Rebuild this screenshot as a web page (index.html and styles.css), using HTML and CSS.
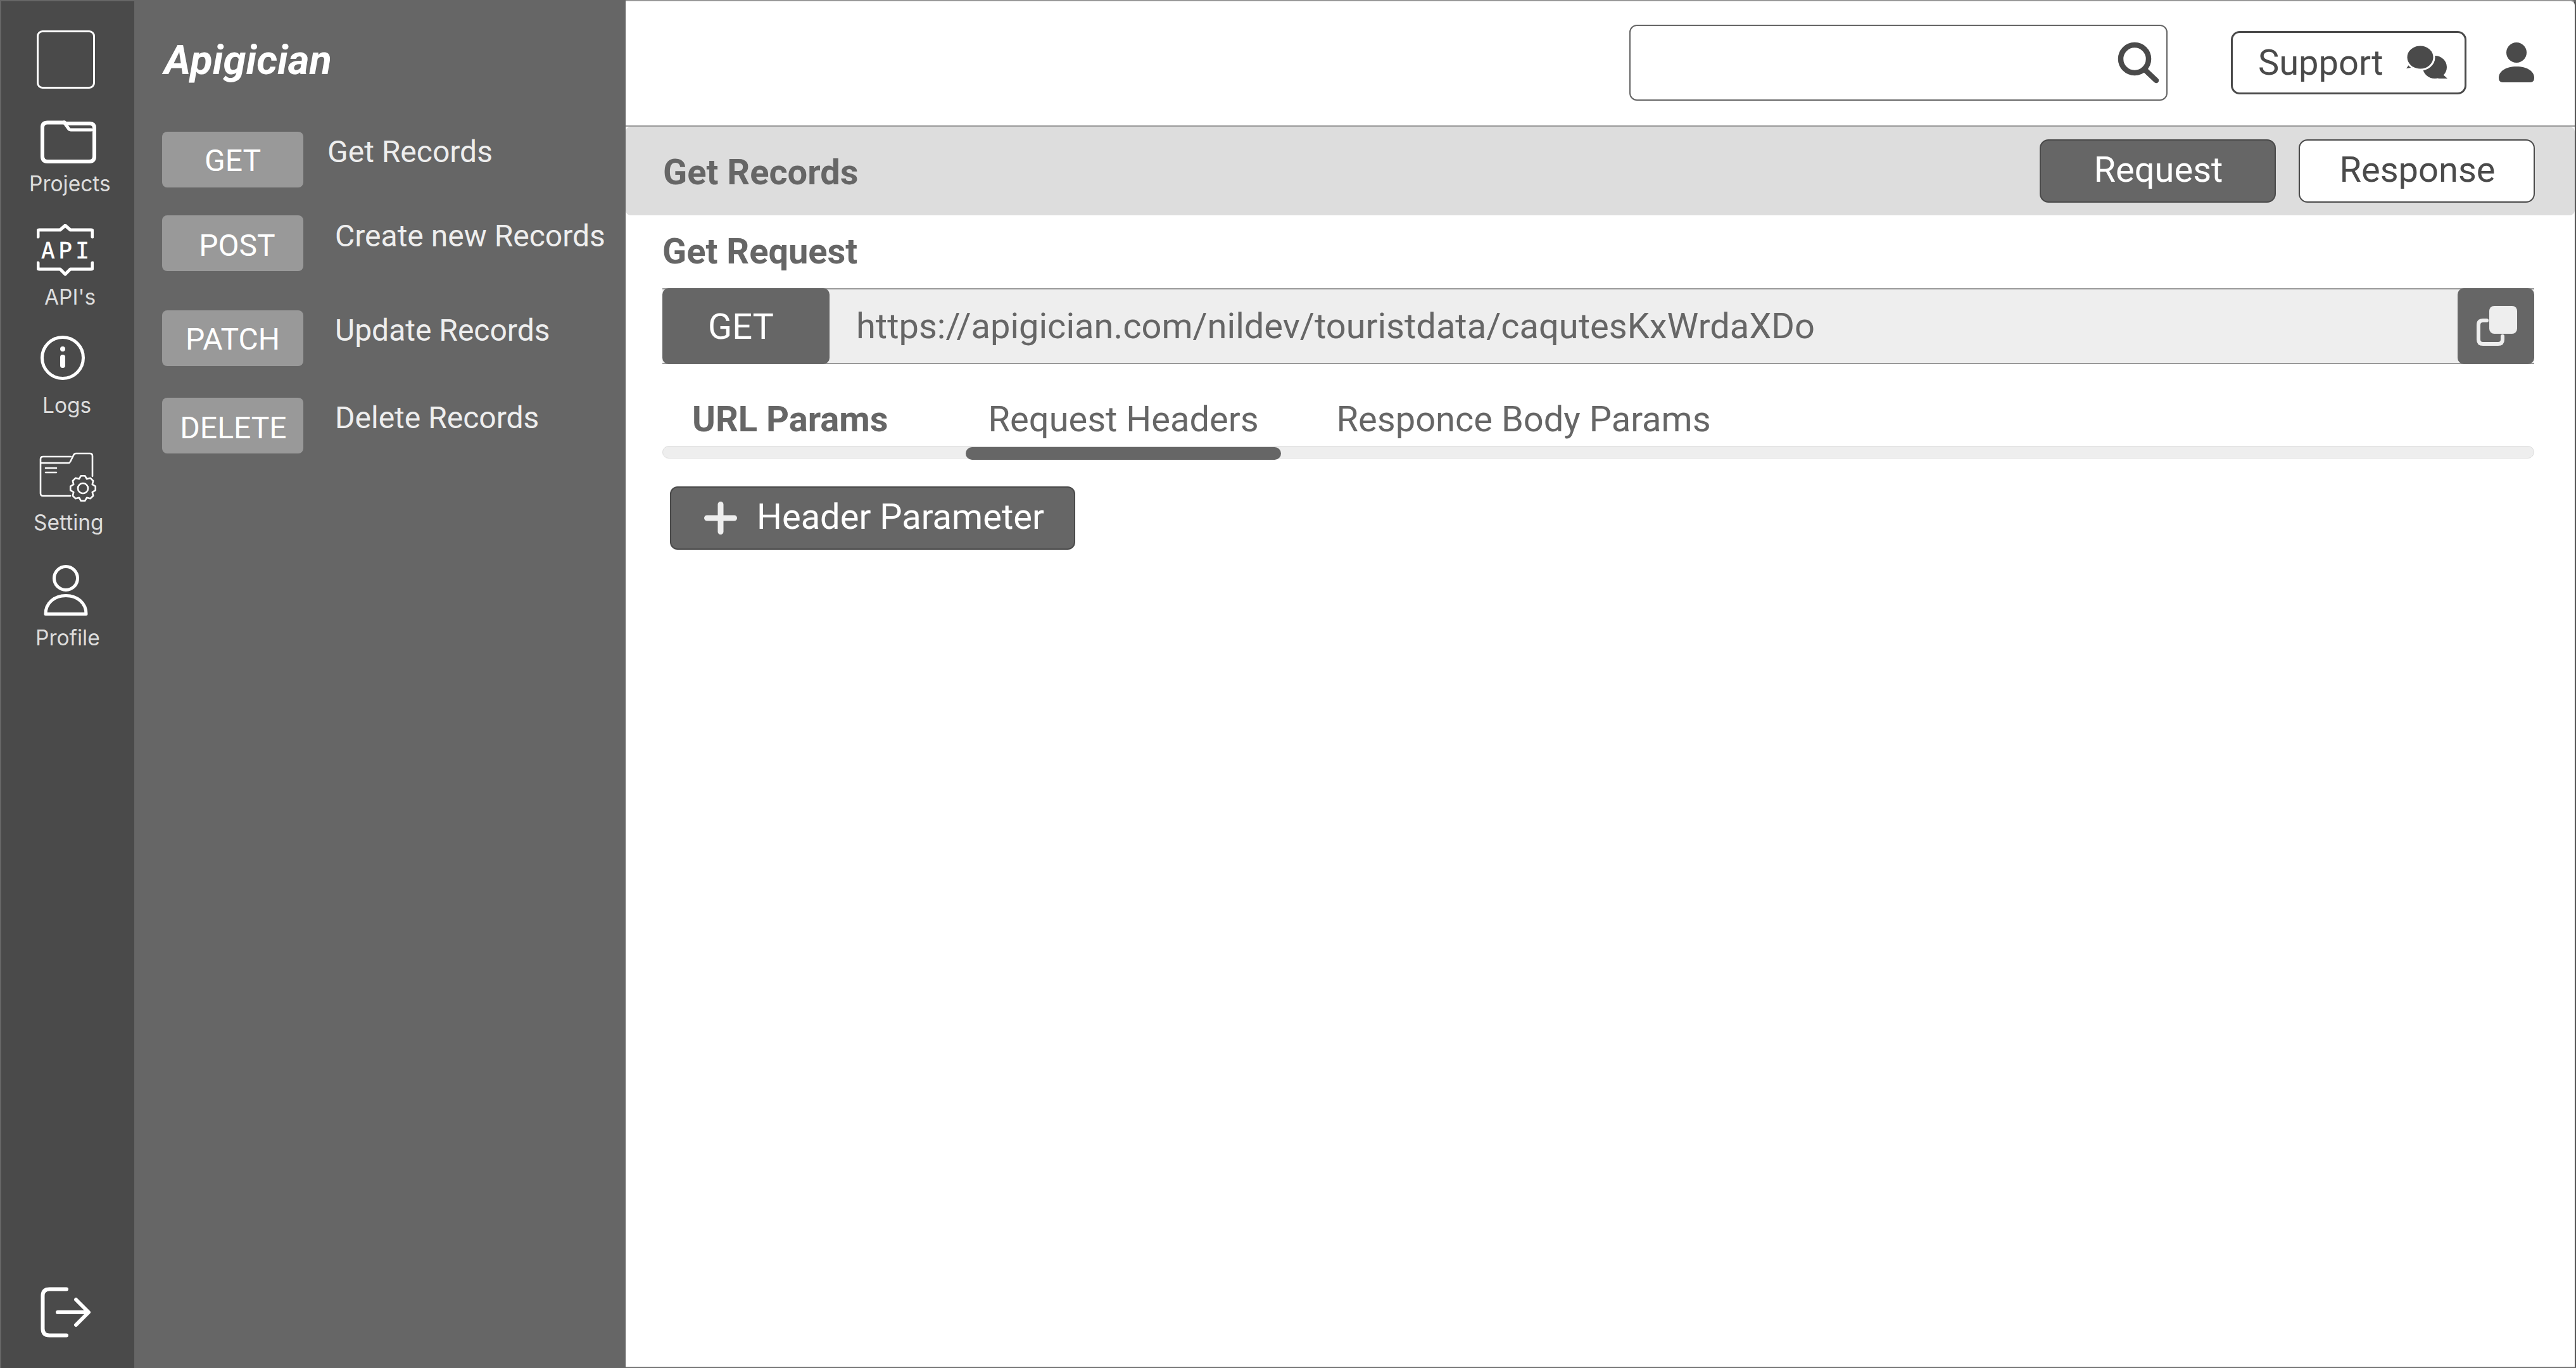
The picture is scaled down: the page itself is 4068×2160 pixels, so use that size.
FILE: index.html
```html
<!DOCTYPE html>
<html lang="en">
<head>
<meta charset="utf-8">
<title>Apigician</title>
<link rel="stylesheet" href="styles.css">
</head>
<body>
<div class="shell">
  <nav class="rail">
    <div class="rail-logo"></div>
    <a class="rail-item item-projects">
      <svg class="ri ri-projects" width="88" height="68" viewBox="0 0 88 68"><path d="M38 3.5H11Q3 3.5 3 11V57Q3 65 11 65H77Q85 65 85 57V12Q85 5 78 5H42"/><path d="M37 3L45 14Q46 15 50 15H80" class="thin"/></svg>
      <span class="rl rl-projects">Projects</span>
    </a>
    <a class="rail-item item-apis">
      <svg class="ri ri-apis" width="90" height="82" viewBox="0 0 90 82"><path class="mid" d="M2 20V11Q2 9 4 9H37L45 2L53 9H86Q88 9 88 11V20M2 61V69Q2 71 4 71H37L45 79L53 71H86Q88 71 88 69V61"/><text class="api-text" x="7" y="54">API</text></svg>
      <span class="rl rl-apis">API's</span>
    </a>
    <a class="rail-item item-logs">
      <svg class="ri ri-logs" width="70" height="70" viewBox="0 0 70 70"><circle cx="35" cy="35" r="32.5" class="mid"/><circle cx="35" cy="21" r="4" class="solid"/><path d="M35 34V47" class="bar"/></svg>
      <span class="rl rl-logs">Logs</span>
    </a>
    <a class="rail-item item-setting">
      <svg class="ri ri-setting" width="92" height="80" viewBox="0 0 92 80"><g class="fine"><path d="M49 69H6Q2 69 2 65V11Q2 7 6 7H50M2 17H46Q48 17 49 15L54 5Q55 2 58 2H80Q84 2 84 6V38M10 25H27M10 32H27"/><polygon transform="translate(69 57)" points="-3.13,-19.75 3.13,-19.75 6.12,-14.78 11.76,-16.18 16.18,-11.76 14.78,-6.12 19.75,-3.13 19.75,3.13 14.78,6.12 16.18,11.76 11.76,16.18 6.12,14.78 3.13,19.75 -3.13,19.75 -6.12,14.78 -11.76,16.18 -16.18,11.76 -14.78,6.12 -19.75,3.13 -19.75,-3.13 -14.78,-6.12 -16.18,-11.76 -11.76,-16.18 -6.12,-14.78"/><circle cx="69" cy="57" r="8"/></g></svg>
      <span class="rl rl-setting">Setting</span>
    </a>
    <a class="rail-item item-profile">
      <svg class="ri ri-profile" width="70" height="80" viewBox="0 0 70 80"><circle cx="35" cy="21" r="18.5" class="mid"/><path class="mid" d="M3 77.5C3 60 17 48.5 35 48.5C53 48.5 67 60 67 77.5Z"/></svg>
      <span class="rl rl-profile">Profile</span>
    </a>
    <a class="rail-logout">
      <svg class="ri" width="80" height="80" viewBox="0 0 80 80"><path d="M41 3.5H14Q3.5 3.5 3.5 14V66Q3.5 76.5 14 76.5H41M27 40H75M56 20L76 40L56 60"/></svg>
    </a>
  </nav>

  <aside class="panel">
    <div class="brand">Apigician</div>
    <div class="ep ep-get"><span class="badge b-get">GET</span><span class="ep-text t-get">Get Records</span></div>
    <div class="ep ep-post"><span class="badge b-post">POST</span><span class="ep-text t-post">Create new Records</span></div>
    <div class="ep ep-patch"><span class="badge b-patch">PATCH</span><span class="ep-text t-patch">Update Records</span></div>
    <div class="ep ep-delete"><span class="badge b-delete">DELETE</span><span class="ep-text t-delete">Delete Records</span></div>
  </aside>

  <main class="main">
    <header class="top">
      <div class="search">
        <svg width="66" height="68" viewBox="0 0 66 68" class="i-search"><circle cx="27" cy="28" r="22"/><path d="M43 45L61 62"/></svg>
      </div>
      <div class="support"><span>Support</span>
        <svg class="i-support" width="66" height="54" viewBox="0 0 66 54"><ellipse cx="45" cy="34" rx="19" ry="18"/><path d="M56 44L65 52L50 52Z"/><path d="M6 28L0 36L13 34Z"/><ellipse class="front" cx="22" cy="18.500" rx="22" ry="19.500"/></svg>
      </div>
      <svg class="i-user" width="56" height="64" viewBox="0 0 56 64"><circle cx="28" cy="16" r="16"/><path d="M0 56C0 45 12 38 28 38C44 38 56 45 56 56Q56 63 50 63H6Q0 63 0 56Z"/></svg>
    </header>

    <section class="bar">
      <h1 class="bar-title">Get Records</h1>
      <div class="seg">
        <span class="seg-btn seg-on">Request</span>
        <span class="seg-btn seg-off">Response</span>
      </div>
    </section>

    <section class="content">
      <h2 class="req-title">Get Request</h2>
      <div class="url">
        <span class="url-method">GET</span>
        <span class="url-text">https://apigician.com/nildev/touristdata/caqutesKxWrdaXDo</span>
        <span class="url-copy">
          <svg width="64" height="64" viewBox="0 0 64 64"><rect x="20" y="0" width="44" height="44" rx="8" class="cf"/><path d="M16 23H10Q3 23 3 30V53Q3 60 10 60H34Q41 60 41 53V48" class="cs"/></svg>
        </span>
      </div>
      <div class="tabs">
        <span class="tab tab-url">URL Params</span>
        <span class="tab tab-hdr">Request Headers</span>
        <span class="tab tab-body">Responce Body Params</span>
      </div>
      <div class="track"><div class="track-on"></div></div>
      <div class="add">
        <svg width="52" height="52" viewBox="0 0 52 52"><path d="M4.500 26H47.500M26 4.500V47.500"/></svg>
        <span class="add-label">Header Parameter</span>
      </div>
    </section>
  </main>
</div>
</body>
</html>
```

FILE: styles.css
```css
* { box-sizing: border-box; }
html, body { margin: 0; padding: 0; background: #fff; }
body { font-family: Roboto, "Liberation Sans", sans-serif; }
h1, h2 { margin: 0; }

.shell { display: flex; width: 4068px; height: 2160px; overflow: hidden; background: #666; }

/* icon rail */
.rail { position: relative; flex: 0 0 210px; margin: 2px 0 0 2px; background: #4a4a4a; display: flex; flex-direction: column; padding-top: 46px; }
.rail-logo { width: 92px; height: 92px; margin-left: 56px; border: 3px solid #fff; border-radius: 9px; }
.rail-item { display: flex; flex-direction: column; align-items: flex-start; font-family: Inter, Roboto, sans-serif; font-size: 33.5px; line-height: 38px; color: #ddd; }
.ri { display: block; fill: none; stroke: #fff; stroke-width: 6; stroke-linecap: round; stroke-linejoin: round; }
.ri .thin { stroke-width: 5; }
.ri .mid { stroke-width: 5; }
.ri .solid { fill: #fff; stroke: none; }
.ri .bar { stroke-width: 8; }
.ri .fine { stroke-width: 2.6; }
.api-text { font-family: "DejaVu Sans Mono", monospace; font-size: 36px; letter-spacing: 5.5px; fill: #fff; stroke: #fff; stroke-width: .5; }

.item-projects { margin-top: 50px; }
.ri-projects { margin-left: 62px; }
.rl-projects { margin: 13px 0 0 44px; }
.item-apis { margin-top: 45px; }
.ri-apis { margin-left: 56px; }
.rl-apis { margin: 14px 0 0 68px; }
.item-logs { margin-top: 42px; }
.ri-logs { margin-left: 62px; }
.rl-logs { margin: 21px 0 0 65px; }
.item-setting { margin-top: 55px; }
.ri-setting { margin-left: 60px; }
.rl-setting { margin: 12px 0 0 51px; }
.item-profile { margin-top: 48px; }
.ri-profile { margin-left: 67px; }
.rl-profile { margin: 16px 0 0 54px; }
.rail-logout { position: absolute; left: 62px; top: 2030px; }

/* endpoints panel */
.panel { flex: 0 0 776px; padding: 0 0 0 44px; color: #eee; }
.brand { font-weight: 700; font-style: italic; font-size: 65px; line-height: 70px; color: #fff; margin-top: 60px; margin-left: 3px; }
.ep { display: flex; align-items: flex-start; }
.ep-get { margin-top: 78px; }
.ep-post { margin-top: 44px; }
.ep-patch { margin-top: 62px; }
.ep-delete { margin-top: 50px; }
.badge { flex: 0 0 223px; height: 88px; background: #999; border-radius: 8px; color: #fff; font-size: 48px; line-height: 88px; text-align: center; }
.b-get { padding-top: 2px; }
.b-post { padding-left: 14px; padding-top: 4px; }
.b-patch { padding-top: 2px; }
.b-delete { padding-top: 4px; padding-left: 2px; }
.ep-text { font-size: 48px; line-height: 54px; white-space: nowrap; }
.t-get { margin-left: 38px; margin-top: 5px; }
.t-post { margin-left: 50px; margin-top: 6px; }
.t-patch { margin-left: 50px; margin-top: 5px; }
.t-delete { margin-left: 50px; margin-top: 5px; }

/* main */
.main { flex: 1; background: #fff; display: flex; flex-direction: column; border-top: 2px solid #999; border-right: 2px solid #555; border-bottom: 2px solid #777; border-radius: 0 8px 0 0; color: #666; }
.top { height: 198px; flex: none; display: flex; align-items: center; justify-content: flex-end; padding-right: 64px; border-bottom: 2px solid #999; padding-bottom: 2px; }
.search { width: 850px; height: 120px; border: 2px solid #666; border-radius: 12px; display: flex; align-items: center; justify-content: flex-end; padding-right: 11px; margin-right: 100px; }
.i-search { fill: none; stroke: #4a4a4a; stroke-width: 8.5; stroke-linecap: round; }
.support { width: 372px; height: 100px; border: 3px solid #4a4a4a; border-radius: 14px; display: flex; align-items: center; color: #4a4a4a; font-size: 56px; padding-left: 40px; margin-right: 51px; }
.i-support { margin-left: 36px; fill: #4a4a4a; }
.i-support .front { stroke: #fff; stroke-width: 3; }
.i-user { fill: #4a4a4a; }

.bar { height: 140px; flex: none; background: #ddd; border-radius: 8px; display: flex; align-items: center; justify-content: space-between; padding: 0 63px 0 59px; }
.bar-title { font-size: 56px; font-weight: 700; color: #666; padding-top: 4px; }
.seg { display: flex; gap: 36px; }
.seg-btn { width: 373px; height: 100px; border-radius: 14px; display: flex; align-items: center; justify-content: center; font-size: 56px; border: 2px solid #4a4a4a; padding: 0 0 4px 2px; }
.seg-on { background: #666; color: #fff; }
.seg-off { background: #fff; color: #4a4a4a; }

.content { padding: 0 64px 0 58px; }
.req-title { font-size: 56px; font-weight: 700; line-height: 64px; color: #666; margin-top: 25px; }
.url { display: flex; height: 120px; margin-top: 26px; background: #eee; border-top: 2px solid #999; border-bottom: 2px solid #999; position: relative; align-items: center; }
.url-method { flex: 0 0 264px; height: 120px; margin: -2px 0; background: #666; color: #fff; border-radius: 10px; font-size: 56px; display: flex; align-items: center; justify-content: center; padding: 2px 16px 0 0; }
.url-text { flex: 1; font-size: 56px; padding-left: 42px; color: #666; white-space: nowrap; }
.url-copy { flex: 0 0 121px; height: 120px; margin: -2px 0; background: #666; border-radius: 10px; display: flex; align-items: center; justify-content: center; padding: 0 0 0 2px; }
.cf { fill: #eee; }
.cs { fill: none; stroke: #eee; stroke-width: 6; stroke-linecap: round; }

.tabs { display: flex; margin-top: 55px; padding-left: 47px; font-size: 56px; line-height: 64px; color: #666; }
.tab-url { font-weight: 700; }
.tab-hdr { margin-left: 158px; }
.tab-body { margin-left: 123px; }
.track { height: 20px; margin-top: 10px; background: #eee; border: 1px solid #ddd; border-radius: 10px; }
.track-on { width: 498px; height: 20px; margin: 1px 0 0 478px; background: #666; border-radius: 10px; }
.add { display: flex; align-items: center; width: 640px; height: 100px; margin: 44px 0 0 12px; background: #666; border: 2px solid #4a4a4a; border-radius: 12px; padding-left: 52px; color: #fff; font-size: 56px; }
.add svg { fill: none; stroke: #eee; stroke-width: 9; stroke-linecap: round; flex: none; margin-right: 31px; }
.add-label { padding-bottom: 4px; }
```
